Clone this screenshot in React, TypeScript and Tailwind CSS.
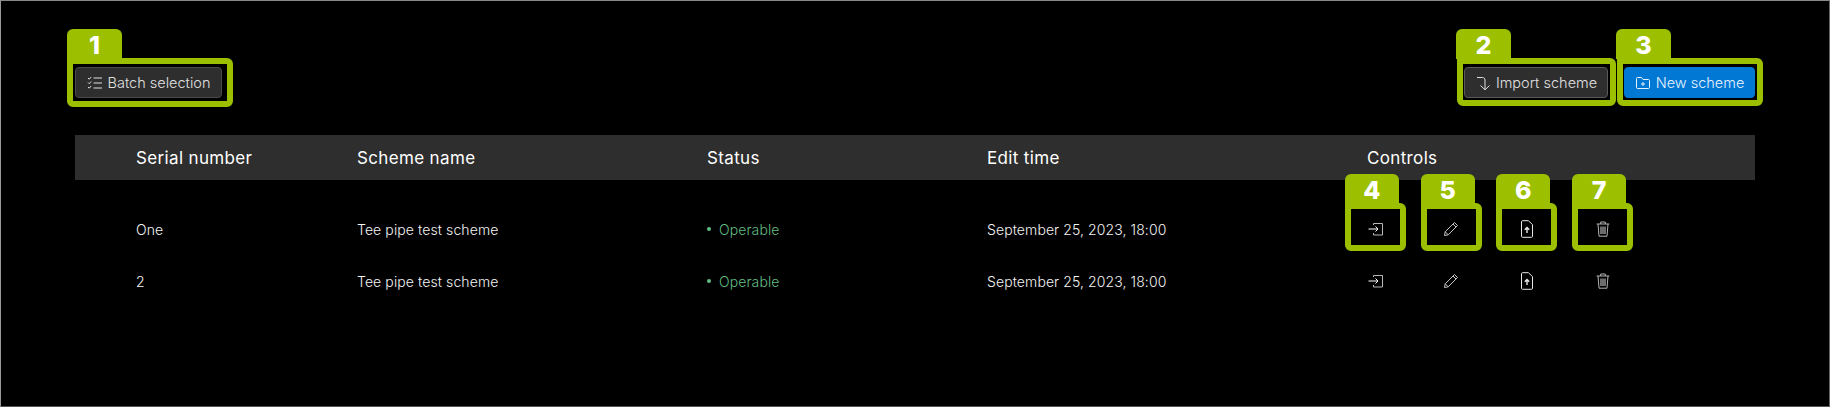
import React from "react";

const Num = ({ n }: { n: string }) => (
  <span className="absolute top-[-38px] left-[-8px] flex h-[30px] w-[55px] items-center justify-center rounded-t-[6px] bg-[#9cc000] pt-[2px] font-['Inter',sans-serif] text-[25px] leading-none font-extrabold text-white">
    {n}
  </span>
);

const Ann = ({ n, children, box }: { n: string; children: React.ReactNode; box: string }) => (
  <div className="relative">
    <span className={"absolute rounded-[6px] rounded-tl-none border-[6px] border-[#9cc000] " + box} />
    <Num n={n} />
    {children}
  </div>
);

const CheckList = () => (
  <svg width="16" height="16" viewBox="0 0 16 16" fill="none" stroke="currentColor" strokeWidth="1">
    <path d="M1 3l1.2 1.2L4.2 2M1 7.5l1.2 1.2 2-2.2M1 12l1.2 1.2 2-2.2M6.5 3H15M6.5 8H15M6.5 13H15" />
  </svg>
);
const ImportI = () => (
  <svg width="16" height="16" viewBox="0 0 16 16" fill="none" stroke="currentColor" strokeWidth="1">
    <path d="M2 2.5H7.5C9 2.5 10 3.5 10 5V14.5M5.5 10.5L10 14.8L14.5 10.5" />
  </svg>
);
const FolderPlus = () => (
  <svg width="16" height="16" viewBox="0 0 16 16" fill="none" stroke="currentColor" strokeWidth="1">
    <path d="M1.5 3.5C1.5 2.9 1.9 2.5 2.5 2.5H6.5L8 4.5H13.5C14.1 4.5 14.5 4.9 14.5 5.5V12.5C14.5 13.1 14.1 13.5 13.5 13.5H2.5C1.9 13.5 1.5 13.1 1.5 12.5Z" />
    <path d="M8 7V11M6 9H10" />
  </svg>
);
const Enter = () => (
  <svg width="18" height="18" viewBox="0 0 18 18" fill="none" strokeWidth="1">
    <path d="M6.5 5V3.5H15.5V15H6.5V13" stroke="#b8b8b8" />
    <path d="M1.5 9H11M8.5 6.5L11 9L8.5 11.5" stroke="#fff" />
  </svg>
);
const Pencil = () => (
  <svg width="18" height="18" viewBox="0 0 18 18" fill="none" stroke="#c4c4c4" strokeWidth="1">
    <path d="M2.5 15.5L3.2 11.8L12.5 2.5L15.5 5.5L6.2 14.8Z" />
    <path d="M11 4L14 7M3.2 11.8L6.2 14.8" />
  </svg>
);
const FileUp = () => (
  <svg width="18" height="18" viewBox="0 0 18 18" fill="none" stroke="#e8e8e8" strokeWidth="1">
    <path d="M3.5 1.7C3.5 1.1 3.9 .7 4.5 .7H10.5L14.5 4.7V16.3C14.5 16.9 14.1 17.3 13.5 17.3H4.5C3.9 17.3 3.5 16.9 3.5 16.3Z" />
    <path d="M9 13V7.5M6.8 9.8L9 7.5L11.2 9.8" strokeWidth="1.4" />
  </svg>
);
const Trash = () => (
  <svg width="18" height="18" viewBox="0 0 18 18" fill="none" stroke="#b4b4b4" strokeWidth="1">
    <path d="M2.7 4H15.3M6.7 4V2H11.3V4M4 4L5 16.2H13L14 4" />
    <path d="M7 6.5V14M9 6.5V14M11 6.5V14" strokeWidth="1.2" />
  </svg>
);

const cols = "grid grid-cols-[221px_350px_280px_380px_1fr] pl-[61px]";

const IconBtn = ({ children }: { children: React.ReactNode }) => (
  <div className="flex h-[36px] w-[49px] items-center justify-center">{children}</div>
);

const Controls = ({ annotated }: { annotated: boolean }) => {
  const icons = [<Enter />, <Pencil />, <FileUp />, <Trash />];
  return (
    <div className="ml-[-16px] flex gap-[26.7px]">
      {icons.map((ic, i) =>
        annotated ? (
          <div key={i} className="relative">
            <span className="absolute -inset-x-[6px] -top-[8px] -bottom-[4px] rounded-[6px] rounded-tl-none border-[6px] border-[#9cc000]" />
            <span className="absolute top-[-37px] left-[-6px] flex h-[30px] w-[54px] items-center justify-center rounded-t-[6px] bg-[#9cc000] pt-[3px] font-['Inter',sans-serif] text-[25px] leading-none font-extrabold text-white">
              {i + 4}
            </span>
            <IconBtn>{ic}</IconBtn>
          </div>
        ) : (
          <IconBtn key={i}>{ic}</IconBtn>
        )
      )}
    </div>
  );
};

const Row = ({ no, annotated }: { no: string; annotated: boolean }) => (
  <div className={cols + " h-[52px] items-center text-[14px] font-light tracking-[0.1px] text-[#f4f4f4]"}>
    <div>{no}</div>
    <div>Tee pipe test scheme</div>
    <div className="flex items-center gap-[8px] text-[#62bd82]">
      <span className="size-[4px] rounded-full bg-[#62bd82]" />
      Operable
    </div>
    <div>September 25, 2023, 18:00</div>
    <Controls annotated={annotated} />
  </div>
);

const Btn = ({ children, w, className }: { children: React.ReactNode; w: string; className: string }) => (
  <div className={"flex h-[31px] items-center justify-center gap-[5px] rounded-[4px] border pt-[1px] text-[14.5px] font-light " + w + " " + className}>
    {children}
  </div>
);

export default function App() {
  return (
    <div className="h-[407px] w-[1830px] overflow-hidden border border-t-[#888888] border-r-[#666666] border-b-[#555555] border-l-[#999999] bg-black pt-[66px] pr-[74px] pl-[74px] font-['Inter',sans-serif] text-white">
      <div className="flex items-start justify-between">
        <Ann n="1" box="-top-[9px] -right-[11px] -bottom-[9px] -left-[8px]">
          <Btn w="w-[147px]" className="border-[#4a4a4a] bg-[#2e2e2e] text-[#e0e0e0]">
            <CheckList />
            Batch selection
          </Btn>
        </Ann>
        <div className="flex gap-[16px]">
          <Ann n="2" box="-top-[9px] -right-[8px] -bottom-[8px] -left-[7px]">
            <Btn w="w-[144px]" className="border-[#5a5a5a] bg-[#2e2e2e] text-[#e0e0e0]">
              <ImportI />
              Import scheme
            </Btn>
          </Ann>
          <Ann n="3" box="-top-[9px] -right-[8px] -bottom-[8px] -left-[7px]">
            <Btn w="w-[131px]" className="border-[#0078d4] bg-[#0078d4] text-[#e6f2fc]">
              <FolderPlus />
              New scheme
            </Btn>
          </Ann>
        </div>
      </div>
      <div className="mt-[37px] w-[1680px]">
        <div className={cols + " h-[45px] items-center bg-[#2e2e2e] pt-[2px] text-[17px] font-normal tracking-[0.35px]"}>
          <div>Serial number</div>
          <div>Scheme name</div>
          <div>Status</div>
          <div>Edit time</div>
          <div>Controls</div>
        </div>
        <div className="pt-[23px]">
          <Row no="One" annotated />
          <Row no="2" annotated={false} />
        </div>
      </div>
    </div>
  );
}
